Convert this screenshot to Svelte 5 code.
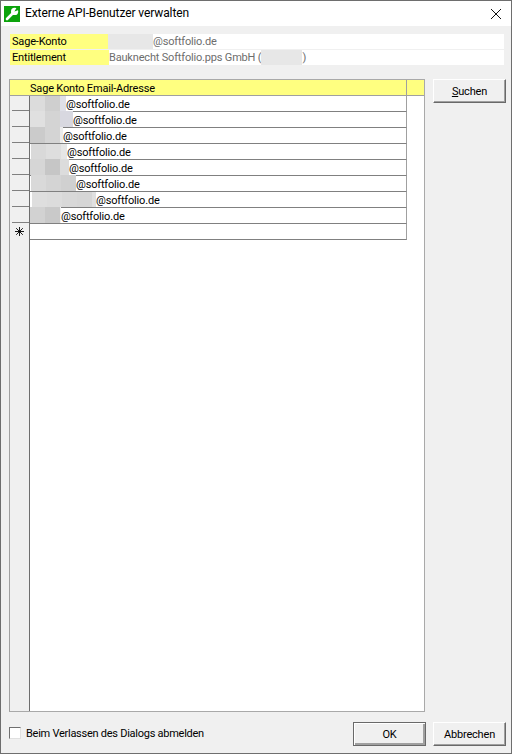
<script>
  // masked-out name parts are drawn as [width, colour] blocks
  const rows = [
    { pad: 0, up: false, blocks: [[15, "#dcdcdc"], [15, "#cfcfcf"], [6, "#dfe0e8"]] },
    { pad: 0, up: true, blocks: [[15, "#e0e0e0"], [15, "#d4d4d4"], [13, "#d8d8e0"]] },
    { pad: 0, up: true, blocks: [[15, "#cbcbcb"], [15, "#d4d4d4"], [3, "#ececec"]] },
    { pad: 1, up: false, blocks: [[15, "#d9d9d9"], [15, "#dedede"], [6, "#e6e6e6"]] },
    { pad: 0, up: true, blocks: [[15, "#d6d6d6"], [15, "#c6c6c6"], [9, "#dcdcdc"]] },
    { pad: 1, up: true, blocks: [[15, "#d9d9d9"], [15, "#d4d4d4"], [15, "#d0d0d0"]] },
    { pad: 2, up: false, blocks: [[15, "#dedede"], [15, "#dcdcdc"], [15, "#d8d8d8"], [15, "#d6d6d6"], [4, "#e0e0e0"]] },
    { pad: 0, up: true, blocks: [[15, "#d2d2d2"], [15, "#c9c9c9"], [1, "#f0f0f0"]] },
  ];
</script>

<div class="window">
  <header class="titlebar">
    <svg class="appicon" width="16" height="16" viewBox="0 0 16 16">
      <rect width="16" height="16" fill="#0ca30c" />
      <path d="M3 13 L9 7" stroke="#fff" stroke-width="2.6" stroke-linecap="round" fill="none" />
      <circle cx="10.6" cy="5.4" r="3.6" fill="#fff" />
      <path d="M10.4 5.6 L13.2 0.8 L16 3.4 Z" fill="#0ca30c" />
    </svg>
    <span class="title">Externe API-Benutzer verwalten</span>
    <svg class="close" width="10" height="10" viewBox="0 0 10 10">
      <path d="M0 0 L10 10 M10 0 L0 10" stroke="#111" stroke-width="1" fill="none" />
    </svg>
  </header>

  <main class="body">
    <section class="info">
      <div class="info-row">
        <span class="label">Sage-Konto</span>
        <span class="value"><span class="blank wide"></span>@softfolio.de</span>
      </div>
      <div class="info-row">
        <span class="label second">Entitlement</span>
        <span class="value">Bauknecht Softfolio.pps GmbH (<span class="blank short"></span>)</span>
      </div>
    </section>

    <div class="middle">
      <div class="grid">
        <div class="head">
          <div class="corner"></div>
          <div class="head-cell">Sage Konto Email-Adresse</div>
          <div class="head-rest"></div>
        </div>
        <div class="grid-body">
          <div class="row-headers">
            {#each rows as _}
              <div class="row-head"></div>
            {/each}
            <div class="row-head star">
              <svg width="9" height="9" viewBox="0 0 9 9">
                <path d="M4.5 0 V9 M0 4.5 H9 M1.2 1.2 L7.8 7.8 M7.8 1.2 L1.2 7.8" stroke="#000" stroke-width="0.9" fill="none" />
              </svg>
            </div>
            <div class="row-fill"></div>
          </div>
          <div class="cells">
            {#each rows as row}
              <div class="cell">
                <span class="mask" class:up={row.up} style="margin-left: {row.pad}px">
                  {#each row.blocks as [w, c]}
                    <i style="width: {w}px; background: {c}"></i>
                  {/each}
                </span>@softfolio.de
              </div>
            {/each}
            <div class="cell"></div>
          </div>
        </div>
      </div>
      <button class="btn search"><u>S</u>uchen</button>
    </div>

    <footer class="footer">
      <label class="check">
        <span class="box"></span>
        Beim Verlassen des Dialogs abmelden
      </label>
      <div class="actions">
        <button class="btn default">OK</button>
        <button class="btn">Abbrechen</button>
      </div>
    </footer>
  </main>
</div>

<style>
  :global(body) {
    margin: 0;
  }

  .window {
    width: 512px;
    height: 754px;
    box-sizing: border-box;
    border: 1px solid #6e6e6e;
    display: flex;
    flex-direction: column;
    background: #f0f0f0;
    font-family: Roboto, "Liberation Sans", sans-serif;
    font-size: 11px;
    letter-spacing: -0.18px;
    color: #000;
    overflow: hidden;
  }

  .titlebar {
    height: 25px;
    flex: none;
    background: #fff;
    display: flex;
    align-items: center;
    padding: 0 10px 0 3px;
  }

  .appicon {
    margin-right: 5px;
  }

  .title {
    flex: 1;
    font-size: 12px;
    letter-spacing: -0.1px;
    padding-bottom: 2px;
  }

  .body {
    flex: 1;
    display: flex;
    flex-direction: column;
    padding: 8px 5px 6px 8px;
    min-height: 0;
  }

  .info {
    display: flex;
    flex-direction: column;
    gap: 1px;
    margin: 0 0 14px 1px;
    width: 494px;
  }

  .info-row {
    height: 15px;
    display: flex;
    background: #fff;
    line-height: 15px;
  }

  .label {
    width: 98px;
    background: #ffff80;
    padding-left: 2px;
    box-sizing: border-box;
    flex: none;
  }

  .second {
    width: 99px;
  }

  .value {
    color: #6d6d6d;
    display: flex;
    white-space: pre;
  }

  .blank {
    display: inline-block;
    height: 15px;
    background: #e7e7e7;
  }

  .wide {
    width: 45px;
  }

  .short {
    width: 41px;
  }

  .middle {
    flex: 1;
    display: flex;
    gap: 8px;
    min-height: 0;
  }

  .grid {
    width: 416px;
    box-sizing: border-box;
    border: 1px solid #a9a9a9;
    border-left-color: #a0a0a0;
    background: #fff;
    display: flex;
    flex-direction: column;
  }

  .head {
    height: 16px;
    flex: none;
    display: flex;
    background: #ffff80;
    border-bottom: 1px solid #a0a0a0;
    box-sizing: border-box;
    line-height: 17px;
  }

  .corner {
    width: 20px;
    flex: none;
  }

  .head-cell {
    width: 377px;
    flex: none;
    border-right: 1px solid #a0a0a0;
    box-sizing: border-box;
  }

  .head-rest {
    flex: 1;
  }

  .grid-body {
    flex: 1;
    display: flex;
    min-height: 0;
  }

  .row-headers {
    width: 20px;
    flex: none;
    display: flex;
    flex-direction: column;
    background: #f0f0f0;
    border-right: 1px solid #6e6e6e;
    box-sizing: border-box;
  }

  .row-head {
    height: 16px;
    flex: none;
    box-sizing: border-box;
    border-bottom: 1px solid #808080;
    margin-left: 2px;
  }

  .row-head:first-child {
    height: 15px;
  }

  .star {
    display: flex;
    align-items: center;
    justify-content: center;
    border-bottom: none;
    margin-left: 0;
  }

  .row-fill {
    flex: 1;
  }

  .cells {
    width: 377px;
    flex: none;
    box-sizing: border-box;
    display: flex;
    flex-direction: column;
  }

  .cell {
    height: 16px;
    flex: none;
    box-sizing: border-box;
    border-bottom: 1px solid #808080;
    border-right: 1px solid #a0a0a0;
    line-height: 17px;
    display: flex;
    white-space: pre;
  }

  .mask {
    display: flex;
    height: 15px;
  }

  .up {
    height: 16px;
    margin-top: -1px;
  }

  .mask i {
    display: block;
    height: 100%;
  }

  .btn {
    width: 73px;
    height: 24px;
    padding: 0;
    background: #f0f0f0;
    border: 1px solid;
    border-color: #fff #696969 #696969 #fff;
    box-shadow: inset -1px -1px 0 #a0a0a0;
    font: inherit;
    letter-spacing: inherit;
    color: #000;
  }

  .default {
    border: 1px solid #696969;
    box-shadow: inset 1px 1px 0 #fff, inset -2px -2px 0 #a0a0a0;
  }

  .search {
    flex: none;
  }

  .footer {
    height: 35px;
    flex: none;
    display: flex;
    align-items: center;
    justify-content: space-between;
    padding-top: 9px;
    box-sizing: border-box;
  }

  .check {
    display: flex;
    align-items: center;
    gap: 5px;
    letter-spacing: -0.26px;
    margin-bottom: 2px;
  }

  .box {
    width: 10px;
    height: 10px;
    background: #fff;
    border: 1px solid #707070;
    border-right-color: #e0e0e0;
    border-bottom-color: #e0e0e0;
  }

  .actions {
    display: flex;
    gap: 7px;
  }
</style>
